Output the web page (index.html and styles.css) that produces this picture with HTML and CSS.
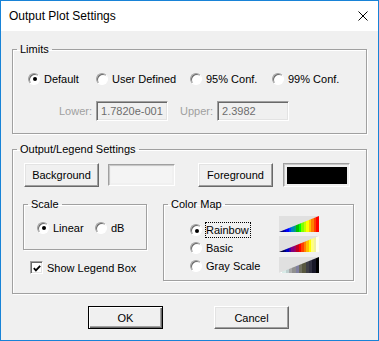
FILE: index.html
```html
<!DOCTYPE html>
<html lang="en">
<head>
    <meta charset="UTF-8">
    <meta name="viewport" content="width=device-width, initial-scale=1.0">
    <title>Output Plot Settings</title>
    <link rel="stylesheet" href="styles.css">
</head>
<body>
    <div class="window">
        <div class="titlebar">
            <span class="title">Output Plot Settings</span>
            <svg class="close" width="10" height="10" viewBox="0 0 10 10">
                <path d="M0.5 0.5 L9.5 9.5 M9.5 0.5 L0.5 9.5" stroke="#000" stroke-width="1" fill="none"/>
            </svg>
        </div>
        <div class="client">
            <fieldset class="group limits">
                <legend>Limits</legend>
                <div class="limits-body">
                    <div class="radio-row">
                        <label class="radio w-default"><span class="dot"><i></i></span>Default</label>
                        <label class="radio w-user"><span class="dot"></span>User Defined</label>
                        <label class="radio w-conf"><span class="dot"></span>95% Conf.</label>
                        <label class="radio"><span class="dot"></span>99% Conf.</label>
                    </div>
                    <div class="range-row">
                        <span class="muted">Lower:</span>
                        <span class="edit">1.7820e-001</span>
                        <span class="muted upper">Upper:</span>
                        <span class="edit">2.3982</span>
                    </div>
                </div>
            </fieldset>

            <fieldset class="group output">
                <legend>Output/Legend Settings</legend>
                <div class="output-body">
                    <div class="color-row">
                        <button class="btn">Background</button>
                        <span class="swatch"><span class="fill light"></span></span>
                        <button class="btn fg">Foreground</button>
                        <span class="swatch tall"><span class="fill dark"></span></span>
                    </div>
                    <div class="lower-row">
                        <div class="left-col">
                            <fieldset class="group scale">
                                <legend>Scale</legend>
                                <div class="scale-body">
                                    <label class="radio w-linear"><span class="dot"><i></i></span>Linear</label>
                                    <label class="radio"><span class="dot"></span>dB</label>
                                </div>
                            </fieldset>
                            <label class="check">
                                <span class="box">
                                    <svg width="11" height="11" viewBox="0 0 11 11">
                                        <path d="M2 5 L4.3 7.5 L9 2.5" stroke="#000" stroke-width="2" fill="none"/>
                                    </svg>
                                </span>
                                Show Legend Box
                            </label>
                        </div>
                        <fieldset class="group colormap">
                            <legend>Color Map</legend>
                            <div class="colormap-body">
                                <div class="map-radios">
                                    <label class="radio map-row"><span class="dot"><i></i></span><span class="focus">Rainbow</span></label>
                                    <label class="radio map-row"><span class="dot"></span>Basic</label>
                                    <label class="radio map-row"><span class="dot"></span>Gray Scale</label>
                                </div>
                                <div class="map-previews">
                                    <span class="preview"><span class="ramp rainbow"></span></span>
                                    <span class="preview second"><span class="ramp basic"></span></span>
                                    <span class="preview third"><span class="ramp gray"></span></span>
                                </div>
                            </div>
                        </fieldset>
                    </div>
                </div>
            </fieldset>

            <div class="footer">
                <button class="btn default">OK</button>
                <button class="btn small">Cancel</button>
            </div>
        </div>
    </div>
</body>
</html>
```

FILE: styles.css
```css
body {
    margin: 0;
    font-family: "Liberation Sans", Arial, sans-serif;
    font-size: 11px;
    color: #000;
    background-color: #f0f0f0;
}

.window {
    width: 379px;
    height: 341px;
    box-sizing: border-box;
    border: 1px solid #1883d7;
    display: flex;
    flex-direction: column;
    background-color: #f0f0f0;
}

.titlebar {
    height: 30px;
    flex-shrink: 0;
    background-color: #fff;
    display: flex;
    align-items: center;
    justify-content: space-between;
    padding: 0 10px 0 8px;
}

.title {
    font-size: 12px;
}

.close {
    display: block;
}

.client {
    flex: 1;
    padding: 12px 11px 0;
}

/* group boxes */
.group {
    margin: 0;
    padding: 0;
    min-width: 0;
    box-sizing: border-box;
    border: 1px solid #a0a0a0;
    box-shadow: inset 1px 1px 0 #fff, 1px 1px 0 #fff;
}

.group legend {
    padding: 0 3px;
    margin-left: 4px;
    line-height: 13px;
}

.limits {
    height: 91px;
}

.limits-body {
    padding: 16px 0 0 15px;
}

.radio-row {
    display: flex;
    height: 13px;
}

.radio {
    display: flex;
    align-items: center;
    gap: 4px;
    height: 13px;
    white-space: nowrap;
}

.w-default { width: 68px; }
.w-user { width: 94px; }
.w-conf { width: 82px; }
.w-linear { width: 58px; }

.dot {
    width: 12px;
    height: 12px;
    box-sizing: border-box;
    border-radius: 50%;
    border: 1px solid;
    border-color: #a0a0a0 #fff #fff #a0a0a0;
    box-shadow: inset 1px 1px 0 #696969;
    background-color: #fff;
    display: flex;
    align-items: center;
    justify-content: center;
    flex-shrink: 0;
}

.dot i {
    width: 4px;
    height: 4px;
    border-radius: 50%;
    background-color: #000;
    margin: 1px 0 0 1px;
}

.range-row {
    display: flex;
    align-items: center;
    gap: 4px;
    margin-top: 16px;
    padding-left: 31px;
}

.muted {
    color: #a0a0a0;
}

.upper {
    margin-left: 8px;
}

.edit {
    width: 72px;
    height: 20px;
    box-sizing: border-box;
    border: 1px solid;
    border-color: #a0a0a0 #fff #fff #a0a0a0;
    box-shadow: inset 1px 1px 0 #696969, inset -1px -1px 0 #e3e3e3;
    padding-left: 4px;
    line-height: 18px;
    color: #6d6d6d;
    white-space: nowrap;
    overflow: hidden;
}

.output {
    height: 151px;
    margin-top: 9px;
}

.output-body {
    padding: 7px 0 0 10px;
}

.color-row {
    display: flex;
    align-items: center;
    margin-left: 1px;
}

/* push buttons */
.btn {
    width: 75px;
    height: 24px;
    box-sizing: border-box;
    padding: 0;
    font: inherit;
    color: #000;
    background-color: #f0f0f0;
    border: 1px solid;
    border-color: #fff #696969 #696969 #fff;
    box-shadow: inset -1px -1px 0 #a0a0a0, inset 1px 1px 0 #e3e3e3;
}

.fg {
    margin-left: 23px;
}

.swatch {
    width: 67px;
    height: 22px;
    box-sizing: border-box;
    margin-left: 9px;
    padding: 2px;
    border: 1px solid;
    border-color: #a0a0a0 #fff #fff #a0a0a0;
    box-shadow: inset 1px 1px 0 #c8c8c8;
    display: flex;
}

.swatch.tall {
    height: 24px;
    margin-left: 10px;
    padding: 3px 2px 2px 3px;
}

.fill {
    flex: 1;
}

.fill.light {
    background-color: #f4f4f4;
}

.fill.dark {
    background-color: #000;
}

.lower-row {
    display: flex;
    gap: 16px;
    margin-top: 11px;
}

.scale {
    width: 124px;
    height: 52px;
}

.scale-body {
    display: flex;
    padding: 10px 0 0 13px;
}

.check {
    display: flex;
    align-items: center;
    gap: 4px;
    margin: 11px 0 0 7px;
    height: 13px;
}

.box {
    width: 13px;
    height: 13px;
    box-sizing: border-box;
    border: 1px solid;
    border-color: #a0a0a0 #fff #fff #a0a0a0;
    box-shadow: inset 1px 1px 0 #696969, inset -1px -1px 0 #e3e3e3;
    background-color: #fff;
    display: flex;
    align-items: center;
    justify-content: center;
}

.box svg {
    display: block;
    margin: 1px 0 0 1px;
}

.colormap {
    width: 191px;
    height: 83px;
}

.colormap-body {
    display: flex;
    padding-left: 26px;
}

.map-radios {
    width: 89px;
    padding-top: 10px;
}

.map-row {
    height: 18px;
}

.focus {
    border: 1px dotted #000;
    padding: 0 1px 0 0;
    margin-left: -1px;
    line-height: 14px;
}

.map-previews {
    display: flex;
    flex-direction: column;
    padding-top: 5px;
}

.preview {
    width: 40px;
    height: 16px;
    background-color: #e0e0e0;
    display: flex;
}

.preview.second { margin-top: 4px; }
.preview.third { margin-top: 5px; }

.ramp {
    flex: 1;
    clip-path: polygon(0 100%, 100% 0, 100% 100%);
}

.ramp.rainbow {
    background: linear-gradient(to right,
        #000040 0 6.25%, #000080 6.25% 12.5%, #0000c0 12.5% 18.75%, #0000ff 18.75% 25%,
        #0040ff 25% 31.25%, #0080c0 31.25% 37.5%, #00a080 37.5% 43.75%, #00c000 43.75% 50%,
        #00ff00 50% 56.25%, #80ff00 56.25% 62.5%, #c0ff00 62.5% 68.75%, #ffff00 68.75% 75%,
        #ffc000 75% 81.25%, #ff8000 81.25% 87.5%, #ff4000 87.5% 93.75%, #ff0000 93.75% 100%);
}

.ramp.basic {
    background: linear-gradient(to right,
        #000000 0 6.25%, #000040 6.25% 12.5%, #000080 12.5% 18.75%, #0000c0 18.75% 25%,
        #4000a0 25% 31.25%, #800080 31.25% 37.5%, #a00060 37.5% 43.75%, #c00020 43.75% 50%,
        #ff0000 50% 56.25%, #ff4000 56.25% 62.5%, #ff8000 62.5% 68.75%, #ffc000 68.75% 75%,
        #ffff00 75% 81.25%, #ffff80 81.25% 87.5%, #f0f0a0 87.5% 93.75%, #fffff0 93.75% 100%);
}

.ramp.gray {
    background: linear-gradient(to right,
        #ffffff 0 8.33%, #d8ece8 8.33% 16.66%, #c0d0d0 16.66% 25%, #a8a8a8 25% 33.33%,
        #909090 33.33% 41.66%, #8080a0 41.66% 50%, #707060 50% 58.33%, #585840 58.33% 66.66%,
        #404048 66.66% 75%, #303040 75% 83.33%, #181828 83.33% 91.66%, #000000 91.66% 100%);
}

.footer {
    display: flex;
    gap: 51px;
    margin-top: 12px;
    padding-left: 76px;
}

.btn.small {
    height: 23px;
}

.btn.default {
    height: 23px;
    border: 1px solid #000;
    box-shadow: inset 1px 1px 0 #fff, inset -1px -1px 0 #696969, inset -2px -2px 0 #a0a0a0;
}
```
